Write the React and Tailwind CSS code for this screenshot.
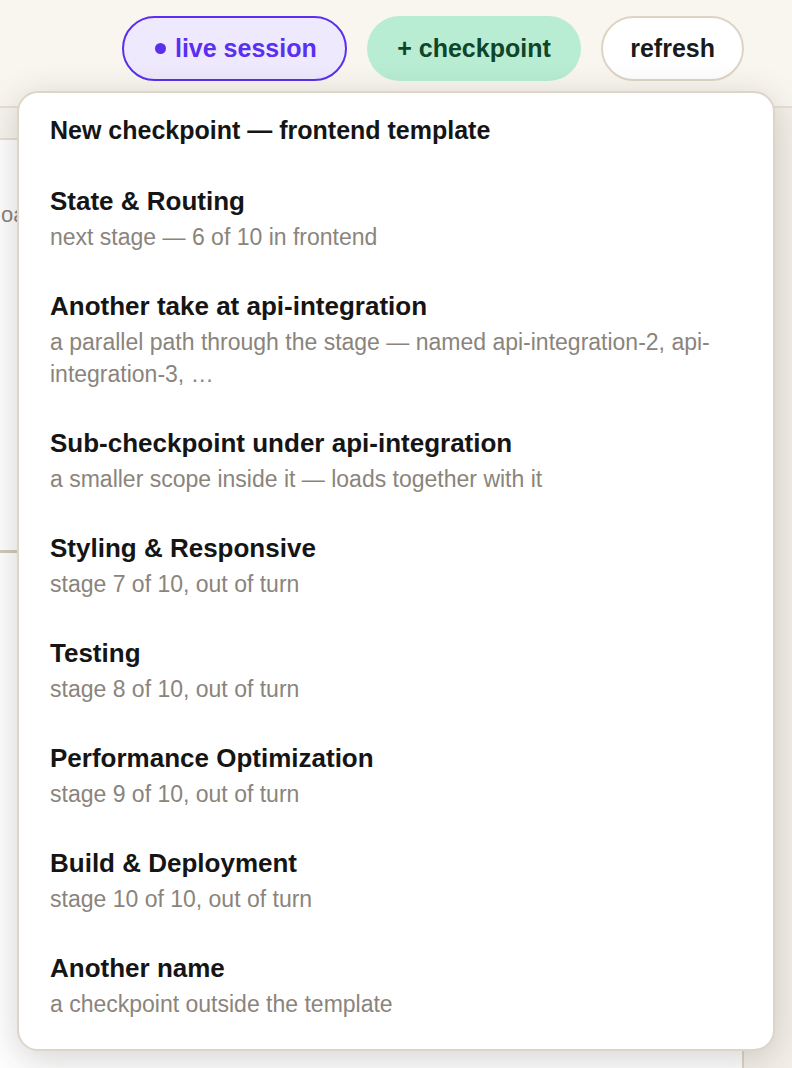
import React from "react";

const items = [
  { t: "State & Routing", s: "next stage — 6 of 10 in frontend" },
  { t: "Another take at api-integration", s: "a parallel path through the stage — named api-integration-2, api-integration-3, …" },
  { t: "Sub-checkpoint under api-integration", s: "a smaller scope inside it — loads together with it" },
  { t: "Styling & Responsive", s: "stage 7 of 10, out of turn" },
  { t: "Testing", s: "stage 8 of 10, out of turn" },
  { t: "Performance Optimization", s: "stage 9 of 10, out of turn" },
  { t: "Build & Deployment", s: "stage 10 of 10, out of turn" },
  { t: "Another name", s: "a checkpoint outside the template" },
];

export default function App() {
  return (
    <div
      className="relative w-[792px] h-[1068px] overflow-hidden bg-[#f4f1ea]"
      style={{ fontFamily: '"Liberation Sans", Arial, sans-serif' }}
    >
      <header className="h-[108px] bg-[#f9f6f0] border-b-2 border-[#e6e0d6] flex items-start justify-end gap-[20px] pr-[48px] pt-[16px]">
        <button className="h-[65px] pl-[31px] pr-[28px] rounded-full border-2 border-[#5a2ff0] bg-[#efe9fd] text-[#5a2ff0] font-bold text-[25px] flex items-center gap-[9px]">
          <span className="w-[11px] h-[11px] rounded-full bg-[#5a2ff0]" />
          live session
        </button>
        <button className="h-[65px] px-[30.5px] rounded-full bg-[#b8edd3] text-[#0f4529] font-bold text-[25px] flex items-center">
          + checkpoint
        </button>
        <button className="h-[65px] px-[27px] rounded-full border-2 border-[#ddd4c6] bg-white text-[#1a1a1a] font-bold text-[25px] flex items-center">
          refresh
        </button>
      </header>
      <div className="flex h-[960px]">
        <div className="w-[742px] flex flex-col bg-white">
          <div className="h-[32px] bg-[#f7f4ee] border-b-2 border-[#e6e0d6]" />
          <div className="flex-1 flex flex-col">
            <div className="h-[64px]" />
            <div className="text-[22px] text-[#8a847c] leading-none pl-[1px]">oad</div>
            <div className="h-[324px]" />
            <div className="w-[40px] h-[3px] bg-[#d2c9bc]" />
          </div>
        </div>
        <div className="flex-1 bg-[#f4f0e9] border-l-2 border-[#ddd5c8]" />
      </div>

      <div className="absolute left-[17px] top-[91px] w-[758px] h-[960px] bg-white border-2 border-[#ddd5c8] rounded-[21px] shadow-[0_8px_36px_rgba(40,35,30,0.2)] py-[7px] px-[31px]">
        <div className="pt-[14px] pb-[20px] text-[25px] leading-[32px] font-bold text-[#151515]">
          New checkpoint — frontend template
        </div>
        {items.map((it) => (
          <div key={it.t} className="py-[18px]">
            <div className="text-[26px] leading-[34px] font-bold text-[#151515] mb-[3px]">{it.t}</div>
            <div className="text-[23px] leading-[32px] text-[#8a847c]">{it.s}</div>
          </div>
        ))}
      </div>
    </div>
  );
}
